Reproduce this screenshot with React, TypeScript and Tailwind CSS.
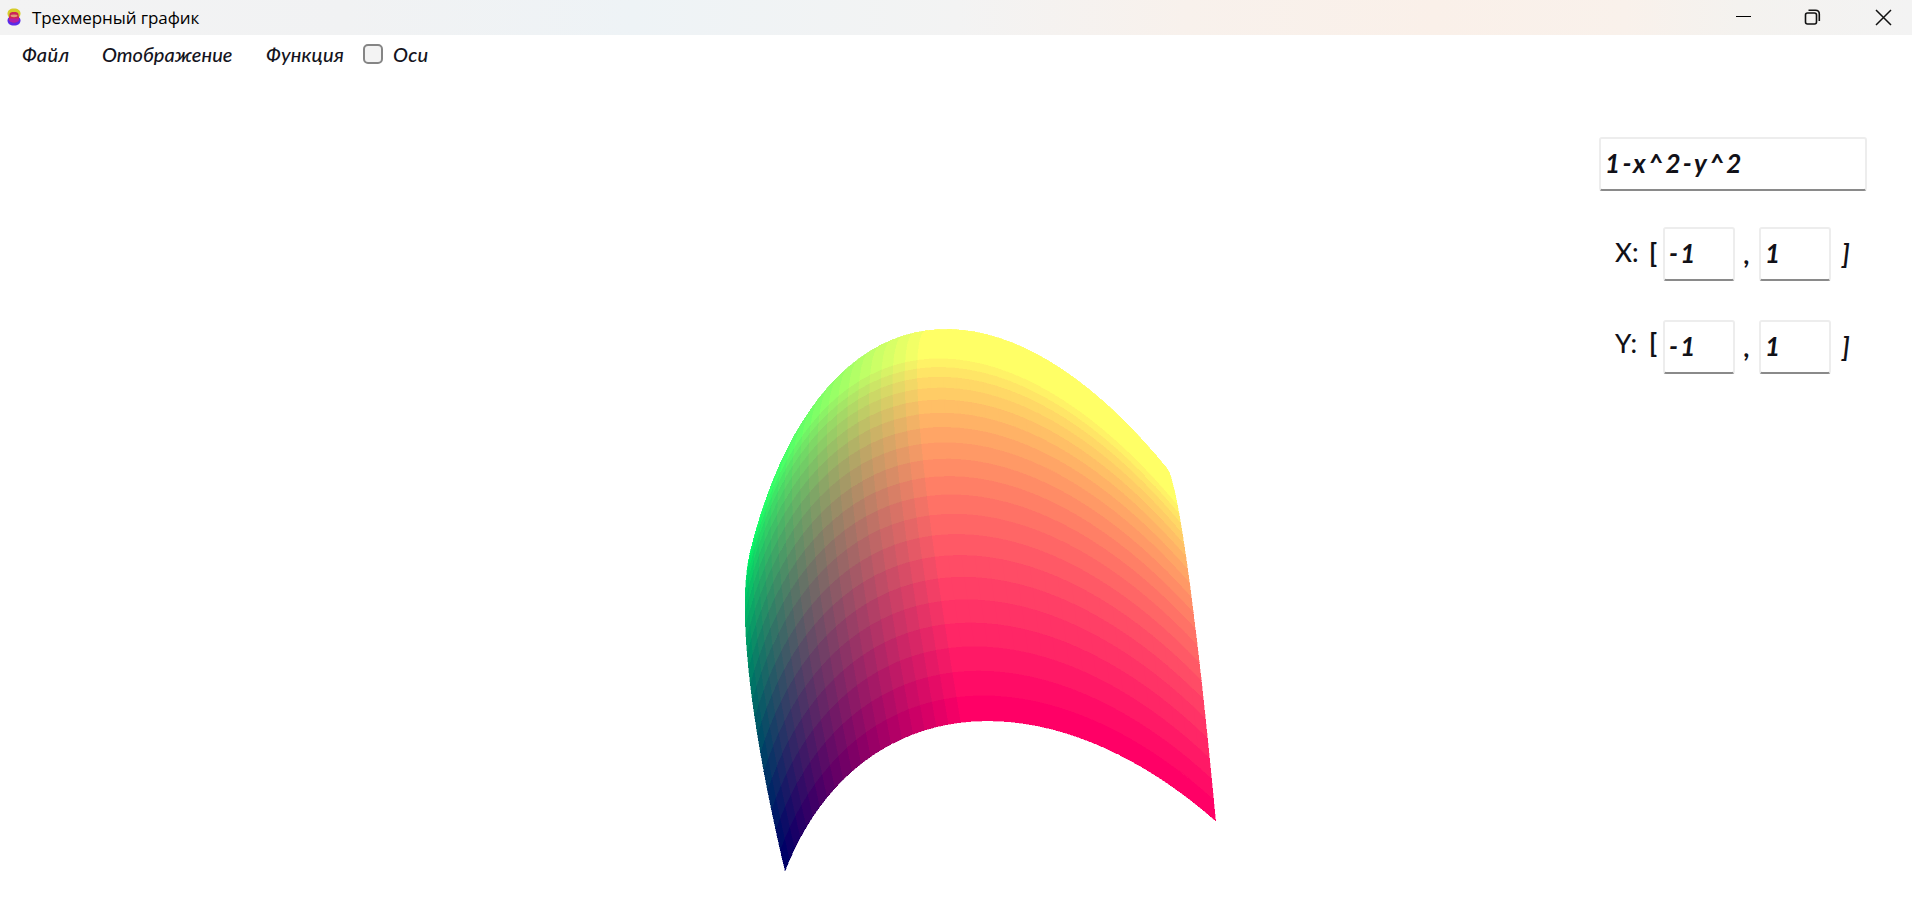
import React from "react";

const GRID = 40;
const STEP = 2 / GRID;
const TOP = 76;

type Point = [number, number];

// Perspective camera applied to the surface z = 1 - x^2 - y^2.
function project(x: number, y: number): Point {
  const z = 1 - x * x - y * y;
  const w = 1 - 0.01017851 * x + 0.13928 * y - 0.1377121 * z;
  return [
    (960.7221 + 204.7893 * x + 133.6083 * y - 169.4954 * z) / w,
    (533.5602 - 33.48804 * x - 88.27828 * y - 222.9918 * z) / w,
  ];
}

function Surface() {
  const cells: React.ReactNode[] = [];
  for (let j = GRID - 1; j >= 0; j--) {
    for (let i = 0; i < GRID; i++) {
      const x = -1 + i * STEP;
      const y = -1 + j * STEP;
      const corners = [
        project(x, y),
        project(x + STEP, y),
        project(x + STEP, y + STEP),
        project(x, y + STEP),
      ];
      const red = Math.min(255, Math.floor(i * 12.75));
      const green = Math.min(255, Math.floor(j * 12.75));
      const color = `rgb(${red},${green},102)`;
      cells.push(
        <polygon
          key={`${i}-${j}`}
          points={corners.map(([a, b]) => `${a.toFixed(2)},${b.toFixed(2)}`).join(" ")}
          fill={color}
          stroke={color}
          strokeWidth="0.4"
        />,
      );
    }
  }
  return (
    <svg
      className="block h-[824px] w-[1599px] shrink-0"
      viewBox={`0 ${TOP} 1599 824`}
      shapeRendering="crispEdges"
    >
      {cells}
    </svg>
  );
}

function AppIcon() {
  return (
    <svg className="h-[20px] w-[16px] blur-[0.7px]" viewBox="0 0 16 20">
      <path d="M8 0.500C4 0.500 1.500 2.500 1.500 5.500C1.500 7.500 2.500 9 4 10H12C13.500 9 14.500 7.500 14.500 5.500C14.500 2.500 12 0.500 8 0.500Z" fill="#d6cc28" />
      <path d="M1.500 12.500C1.500 9.500 4 8 8 8S14.500 9.500 14.500 12.500S12 17.500 8 17.500S1.500 15.500 1.500 12.500Z" fill="#5a2ae8" />
      <path d="M3.500 6.500C3.500 4.500 5.500 4 8 4S12.500 4.500 12.500 6.500C12.500 8 13.500 10 13 12C12.500 13.500 10.500 14.500 8 14.500S3.500 13.500 3 12C2.500 10 3.500 8 3.500 6.500Z" fill="#cc2458" />
      <path d="M3 10.500H13C13.500 13 11 14.500 8 14.500S2.500 13 3 10.500Z" fill="#b41ea8" />
      <ellipse cx="8" cy="7.800" rx="3.500" ry="1.400" fill="#e09a78" />
    </svg>
  );
}

function TitleBar() {
  return (
    <header className="flex h-[35px] shrink-0 items-center bg-[linear-gradient(90deg,#f3f3f3_0%,#f1f2f3_18%,#eef3f6_33%,#f3f3f3_50%,#f8f1ec_62%,#faf0e9_75%,#f9f1eb_85%,#f4f2ef_91%,#f3f3f3_100%)] pl-[6px]">
      <AppIcon />
      <h1 className="ml-[10px] font-['Open_Sans',sans-serif] text-[17px] leading-[35px] tracking-[-0.08px] text-black">
        Трехмерный график
      </h1>
      <div className="ml-auto flex items-center pr-[20px]">
        <svg className="h-[18px] w-[18px]" viewBox="0 0 18 18" fill="none" stroke="#000" shapeRendering="crispEdges">
          <path d="M2 7.500H17" />
        </svg>
        <svg className="ml-[51px] h-[18px] w-[18px]" viewBox="0 0 18 18" fill="none" stroke="#111" strokeWidth="1.600">
          <rect x="2.500" y="4" width="11" height="11" rx="2" />
          <path d="M5.500 1.200H12.500Q16.300 1.200 16.300 5V12" />
        </svg>
        <svg className="ml-[53px] h-[18px] w-[18px]" viewBox="0 0 18 18" fill="none" stroke="#111" strokeWidth="1.500">
          <path d="M2 1L17 16M17 1L2 16" />
        </svg>
      </div>
    </header>
  );
}

function MenuBar() {
  return (
    <nav className="flex h-[41px] shrink-0 items-center pb-[3px] pl-[22px] text-[20px] leading-[38px] font-medium text-[#141420] italic">
      <span className="w-[80px] tracking-[0.3px]">Файл</span>
      <span className="w-[164px]">Отображение</span>
      <span className="w-[97px] tracking-[0.2px]">Функция</span>
      <label className="flex items-center">
        <span className="h-[20px] w-[20px] rounded-[5px] border-2 border-[#858585] bg-[#f3f3f3]" />
        <span className="ml-[10px] pb-[1px] tracking-[0.3px]">Оси</span>
      </label>
    </nav>
  );
}

function Field({ value, wide = false }: { value: string; wide?: boolean }) {
  return (
    <div
      className={`${wide ? "w-[268px] tracking-[2.3px]" : "w-[72px] tracking-[2.2px]"} h-[54px] shrink-0 rounded-[3px] border-2 border-[#ededed] border-b-[#8a8a8a] bg-white pl-[4px] leading-[49px] font-bold`}
    >
      {value}
    </div>
  );
}

function Range({ label, from, to, raised = false }: { label: string; from: string; to: string; raised?: boolean }) {
  return (
    <div className="flex h-[54px] items-center pl-[16px] leading-[50px] font-bold">
      <span className={`${raised ? "pb-[9px]" : "pb-[4px]"} w-[34px] font-medium not-italic`}>{label}:</span>
      <span className={`${raised ? "pb-[8px]" : "pb-[2px]"} w-[14px] not-italic`}>[</span>
      <Field value={from} />
      <span className="w-[24px] pl-[9px]">,</span>
      <Field value={to} />
      <span className="pl-[11px]">]</span>
    </div>
  );
}

export default function App() {
  return (
    <div className="flex h-[900px] w-[1912px] flex-col overflow-hidden bg-white font-['Lato',sans-serif]">
      <TitleBar />
      <MenuBar />
      <main className="flex flex-1">
        <Surface />
        <aside className="flex flex-col pt-[61px] text-[26px] text-[#111118] italic">
          <Field value="1-x^2-y^2" wide />
          <div className="mt-[36px] flex flex-col gap-[39px]">
            <Range label="X" from="-1" to="1" />
            <Range label="Y" from="-1" to="1" raised />
          </div>
        </aside>
      </main>
    </div>
  );
}
